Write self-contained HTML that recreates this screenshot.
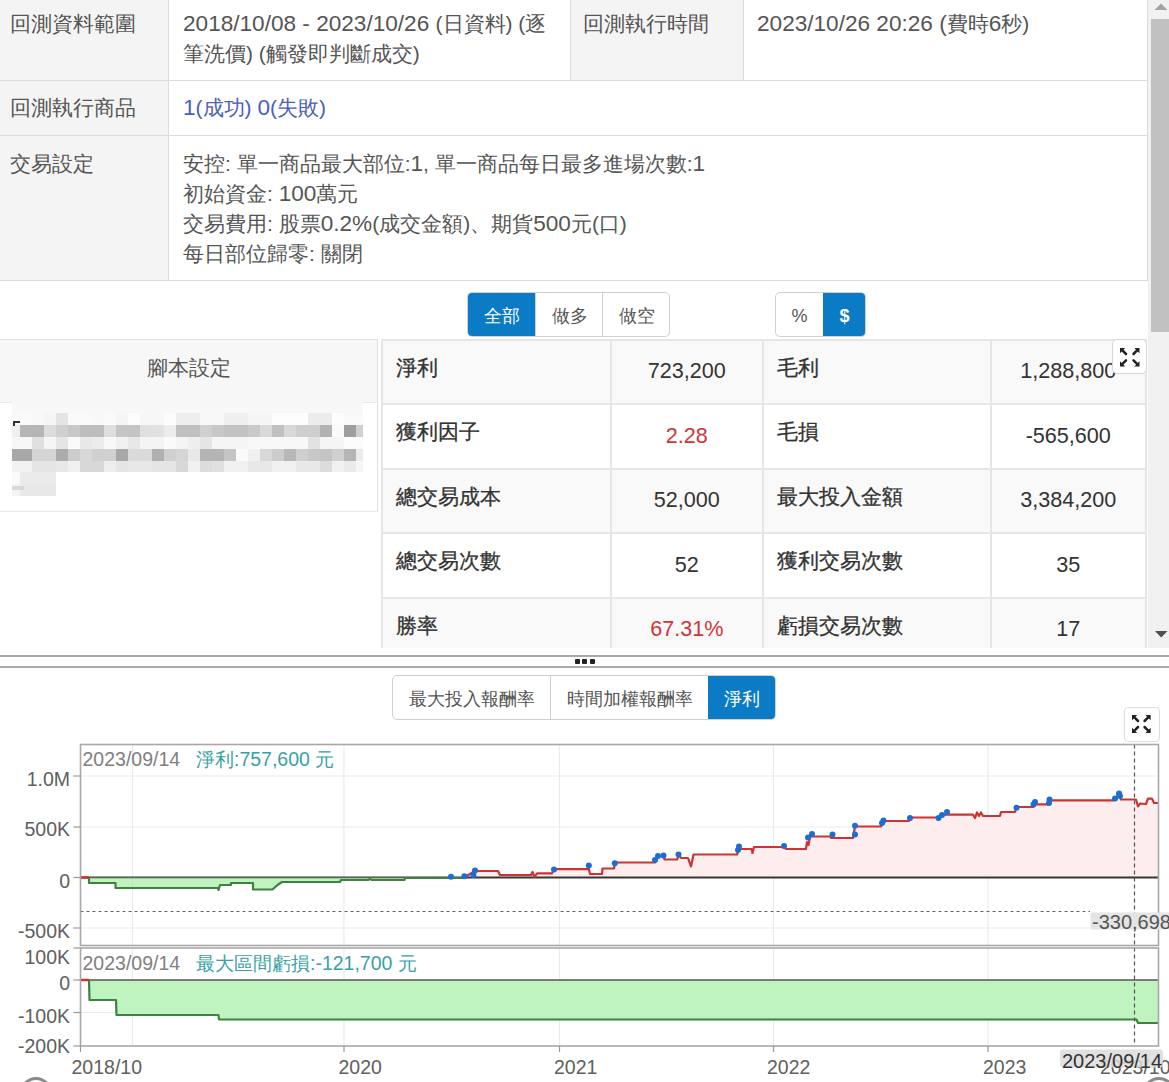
<!DOCTYPE html>
<html><head><meta charset="utf-8">
<style>
html,body{margin:0;padding:0;}
body{width:1169px;height:1082px;overflow:hidden;position:relative;background:#fff;font-family:"Liberation Sans",sans-serif;color:#555;}
.a{position:absolute;box-sizing:border-box;}
.t{position:absolute;font-size:21px;line-height:30px;white-space:nowrap;}
.lbl{background:#f4f4f4;}
.hl{position:absolute;height:1px;background:#dcdcdc;}
.vl{position:absolute;width:1px;background:#dcdcdc;}
.n{font-size:22.6px;line-height:1;}
.btn{position:absolute;box-sizing:border-box;font-size:18px;line-height:27px;text-align:center;color:#555;}
.grp{position:absolute;box-sizing:border-box;border:1px solid #d0d0d0;border-radius:5px;overflow:hidden;background:#fff;}
.act{background:#0b7bc6;color:#fff;}
.sh{position:absolute;font-size:21px;line-height:30px;white-space:nowrap;color:#333;-webkit-text-stroke:0.3px #333;}
.sv{position:absolute;font-size:21.6px;line-height:30px;white-space:nowrap;color:#333;text-align:center;}
.red{color:#d0343a;}
</style></head><body>

<!-- ===== TOP TABLE ===== -->
<div class="a lbl" style="left:0;top:0;width:168px;height:80px"></div>
<div class="a lbl" style="left:571px;top:0;width:172px;height:80px"></div>
<div class="a lbl" style="left:0;top:81px;width:168px;height:54px"></div>
<div class="a lbl" style="left:0;top:136px;width:168px;height:144px"></div>
<div class="vl" style="left:168px;top:0;height:280px"></div>
<div class="vl" style="left:570px;top:0;height:80px"></div>
<div class="vl" style="left:743px;top:0;height:80px"></div>
<div class="vl" style="left:1147px;top:0;height:280px"></div>
<div class="hl" style="left:0;top:80px;width:1148px"></div>
<div class="hl" style="left:0;top:135px;width:1148px"></div>
<div class="hl" style="left:0;top:280px;width:1148px"></div>

<div class="t" style="left:9.5px;top:9px">回測資料範圍</div>
<div class="t" style="left:183px;top:9px"><span class="n">2018/10/08 - 2023/10/26 </span>(日資料) (逐<br>筆洗價) (觸發即判斷成交)</div>
<div class="t" style="left:583px;top:9px">回測執行時間</div>
<div class="t" style="left:757px;top:9px"><span class="n">2023/10/26 20:26 (</span>費時<span class="n">6</span>秒)</div>
<div class="t" style="left:9.5px;top:93px">回測執行商品</div>
<div class="t" style="left:183px;top:93px;color:#4a60b8"><span class="n">1</span>(成功) <span class="n">0</span>(失敗)</div>
<div class="t" style="left:9.5px;top:149px">交易設定</div>
<div class="t" style="left:183px;top:149px">安控: 單一商品最大部位:<span class="n">1</span>, 單一商品每日最多進場次數:<span class="n">1</span><br>初始資金: <span class="n">100</span>萬元<br>交易費用: 股票<span class="n">0.2%</span>(成交金額)、期貨<span class="n">500</span>元(口)<br>每日部位歸零: 關閉</div>

<!-- scrollbar -->
<div class="a" style="left:1148px;top:0;width:21px;height:648px;background:#f1f1f1"></div>
<div class="a" style="left:1151px;top:19px;width:18px;height:313px;background:#c1c1c1"></div>
<svg class="a" style="left:1148px;top:0" width="21" height="648">
<polygon points="6.5,10 19.5,10 13,3.5" fill="#a3a3a3"/>
<polygon points="7,631 19.5,631 13.2,637.5" fill="#505050"/>
</svg>

<!-- ===== BUTTON GROUPS ===== -->
<div class="grp" style="left:467px;top:292px;width:203px;height:45px">
  <div class="btn act" style="left:0;top:0;width:67px;height:43px;padding-top:9.5px">全部</div>
  <div class="btn" style="left:67px;top:0;width:68px;height:43px;padding-top:9.5px;border-left:1px solid #d0d0d0">做多</div>
  <div class="btn" style="left:134px;top:0;width:68px;height:43px;padding-top:9.5px;border-left:1px solid #d0d0d0">做空</div>
</div>
<div class="grp" style="left:775px;top:292px;width:91px;height:45px">
  <div class="btn" style="left:0;top:0;width:47px;height:43px;padding-top:9.5px">%</div>
  <div class="btn act" style="left:47px;top:0;width:43px;height:43px;padding-top:9.5px;font-weight:bold">$</div>
</div>

<!-- ===== SCRIPT PANEL ===== -->
<div class="a" style="left:0;top:339px;width:378px;height:63px;background:#f7f7f7;border-top:1px solid #e0e0e0;border-right:1px solid #e0e0e0"></div>
<div class="t" style="left:0;top:353px;width:377px;text-align:center">腳本設定</div>
<div class="a" style="left:0;top:402px;width:378px;height:110px;border-top:1px solid #e8e8e8;border-bottom:1px solid #e8e8e8;border-right:1px solid #e0e0e0"></div>
<div class="a" style="left:0;top:398px;width:377px;height:120px;overflow:hidden">
<div class="a" style="left:0;top:0;width:377px;height:120px;filter:blur(0.7px)">
<div class="a" style="left:12px;top:4px;width:8px;height:11px;background:#f8f8f8"></div>
<div class="a" style="left:20px;top:4px;width:12px;height:11px;background:#f8f8f8"></div>
<div class="a" style="left:32px;top:4px;width:12px;height:11px;background:#f8f8f8"></div>
<div class="a" style="left:44px;top:4px;width:12px;height:11px;background:#f8f8f8"></div>
<div class="a" style="left:56px;top:4px;width:12px;height:11px;background:#f8f8f8"></div>
<div class="a" style="left:68px;top:4px;width:12px;height:11px;background:#f8f8f8"></div>
<div class="a" style="left:80px;top:4px;width:12px;height:11px;background:#f8f8f8"></div>
<div class="a" style="left:92px;top:4px;width:12px;height:11px;background:#f8f8f8"></div>
<div class="a" style="left:104px;top:4px;width:12px;height:11px;background:#f8f8f8"></div>
<div class="a" style="left:116px;top:4px;width:12px;height:11px;background:#f8f8f8"></div>
<div class="a" style="left:128px;top:4px;width:12px;height:11px;background:#f8f8f8"></div>
<div class="a" style="left:140px;top:4px;width:12px;height:11px;background:#f8f8f8"></div>
<div class="a" style="left:152px;top:4px;width:12px;height:11px;background:#f8f8f8"></div>
<div class="a" style="left:164px;top:4px;width:12px;height:11px;background:#f8f8f8"></div>
<div class="a" style="left:176px;top:4px;width:12px;height:11px;background:#f8f8f8"></div>
<div class="a" style="left:188px;top:4px;width:12px;height:11px;background:#f8f8f8"></div>
<div class="a" style="left:200px;top:4px;width:12px;height:11px;background:#f8f8f8"></div>
<div class="a" style="left:212px;top:4px;width:12px;height:11px;background:#f8f8f8"></div>
<div class="a" style="left:224px;top:4px;width:12px;height:11px;background:#f8f8f8"></div>
<div class="a" style="left:236px;top:4px;width:12px;height:11px;background:#f8f8f8"></div>
<div class="a" style="left:248px;top:4px;width:12px;height:11px;background:#f8f8f8"></div>
<div class="a" style="left:260px;top:4px;width:12px;height:11px;background:#f8f8f8"></div>
<div class="a" style="left:272px;top:4px;width:12px;height:11px;background:#f8f8f8"></div>
<div class="a" style="left:284px;top:4px;width:12px;height:11px;background:#f8f8f8"></div>
<div class="a" style="left:296px;top:4px;width:12px;height:11px;background:#f8f8f8"></div>
<div class="a" style="left:308px;top:4px;width:12px;height:11px;background:#f8f8f8"></div>
<div class="a" style="left:320px;top:4px;width:12px;height:11px;background:#f8f8f8"></div>
<div class="a" style="left:332px;top:4px;width:12px;height:11px;background:#f8f8f8"></div>
<div class="a" style="left:344px;top:4px;width:12px;height:11px;background:#f8f8f8"></div>
<div class="a" style="left:356px;top:4px;width:7px;height:11px;background:#f8f8f8"></div>
<div class="a" style="left:12px;top:15px;width:8px;height:11.5px;background:#fafafa"></div>
<div class="a" style="left:20px;top:15px;width:12px;height:11.5px;background:#fafafa"></div>
<div class="a" style="left:32px;top:15px;width:12px;height:11.5px;background:#f8f8f8"></div>
<div class="a" style="left:44px;top:15px;width:12px;height:11.5px;background:#f5f5f5"></div>
<div class="a" style="left:56px;top:15px;width:12px;height:11.5px;background:#e4e4e4"></div>
<div class="a" style="left:68px;top:15px;width:12px;height:11.5px;background:#fafafa"></div>
<div class="a" style="left:80px;top:15px;width:12px;height:11.5px;background:#fafafa"></div>
<div class="a" style="left:92px;top:15px;width:12px;height:11.5px;background:#f8f8f8"></div>
<div class="a" style="left:104px;top:15px;width:12px;height:11.5px;background:#fafafa"></div>
<div class="a" style="left:116px;top:15px;width:12px;height:11.5px;background:#f5f5f5"></div>
<div class="a" style="left:128px;top:15px;width:12px;height:11.5px;background:#fdfdfd"></div>
<div class="a" style="left:140px;top:15px;width:12px;height:11.5px;background:#f7f7f7"></div>
<div class="a" style="left:152px;top:15px;width:12px;height:11.5px;background:#f7f7f7"></div>
<div class="a" style="left:164px;top:15px;width:12px;height:11.5px;background:#fcfcfc"></div>
<div class="a" style="left:176px;top:15px;width:12px;height:11.5px;background:#eeeeee"></div>
<div class="a" style="left:188px;top:15px;width:12px;height:11.5px;background:#eeeeee"></div>
<div class="a" style="left:200px;top:15px;width:12px;height:11.5px;background:#f8f8f8"></div>
<div class="a" style="left:212px;top:15px;width:12px;height:11.5px;background:#f8f8f8"></div>
<div class="a" style="left:224px;top:15px;width:12px;height:11.5px;background:#efefef"></div>
<div class="a" style="left:236px;top:15px;width:12px;height:11.5px;background:#efefef"></div>
<div class="a" style="left:248px;top:15px;width:12px;height:11.5px;background:#f5f5f5"></div>
<div class="a" style="left:260px;top:15px;width:12px;height:11.5px;background:#f5f5f5"></div>
<div class="a" style="left:272px;top:15px;width:12px;height:11.5px;background:#fdfdfd"></div>
<div class="a" style="left:284px;top:15px;width:12px;height:11.5px;background:#fdfdfd"></div>
<div class="a" style="left:296px;top:15px;width:12px;height:11.5px;background:#fdfdfd"></div>
<div class="a" style="left:308px;top:15px;width:12px;height:11.5px;background:#ececec"></div>
<div class="a" style="left:320px;top:15px;width:12px;height:11.5px;background:#ececec"></div>
<div class="a" style="left:332px;top:15px;width:12px;height:11.5px;background:#fdfdfd"></div>
<div class="a" style="left:344px;top:15px;width:12px;height:11.5px;background:#f9f9f9"></div>
<div class="a" style="left:356px;top:15px;width:7px;height:11.5px;background:#f9f9f9"></div>
<div class="a" style="left:12px;top:26.5px;width:8px;height:12.5px;background:#f0f0f0"></div>
<div class="a" style="left:20px;top:26.5px;width:12px;height:12.5px;background:#b5b5b5"></div>
<div class="a" style="left:32px;top:26.5px;width:12px;height:12.5px;background:#b5b5b5"></div>
<div class="a" style="left:44px;top:26.5px;width:12px;height:12.5px;background:#dcdcdc"></div>
<div class="a" style="left:56px;top:26.5px;width:12px;height:12.5px;background:#d0d0d0"></div>
<div class="a" style="left:68px;top:26.5px;width:12px;height:12.5px;background:#c8c8c8"></div>
<div class="a" style="left:80px;top:26.5px;width:12px;height:12.5px;background:#bdbdbd"></div>
<div class="a" style="left:92px;top:26.5px;width:12px;height:12.5px;background:#bdbdbd"></div>
<div class="a" style="left:104px;top:26.5px;width:12px;height:12.5px;background:#dedede"></div>
<div class="a" style="left:116px;top:26.5px;width:12px;height:12.5px;background:#c5c5c5"></div>
<div class="a" style="left:128px;top:26.5px;width:12px;height:12.5px;background:#c4c4c4"></div>
<div class="a" style="left:140px;top:26.5px;width:12px;height:12.5px;background:#e0e0e0"></div>
<div class="a" style="left:152px;top:26.5px;width:12px;height:12.5px;background:#e2e2e2"></div>
<div class="a" style="left:164px;top:26.5px;width:12px;height:12.5px;background:#ececec"></div>
<div class="a" style="left:176px;top:26.5px;width:12px;height:12.5px;background:#c0c0c0"></div>
<div class="a" style="left:188px;top:26.5px;width:12px;height:12.5px;background:#c0c0c0"></div>
<div class="a" style="left:200px;top:26.5px;width:12px;height:12.5px;background:#d0d0d0"></div>
<div class="a" style="left:212px;top:26.5px;width:12px;height:12.5px;background:#c8c8c8"></div>
<div class="a" style="left:224px;top:26.5px;width:12px;height:12.5px;background:#c2c2c2"></div>
<div class="a" style="left:236px;top:26.5px;width:12px;height:12.5px;background:#c2c2c2"></div>
<div class="a" style="left:248px;top:26.5px;width:12px;height:12.5px;background:#c9c9c9"></div>
<div class="a" style="left:260px;top:26.5px;width:12px;height:12.5px;background:#d9d9d9"></div>
<div class="a" style="left:272px;top:26.5px;width:12px;height:12.5px;background:#c0c0c0"></div>
<div class="a" style="left:284px;top:26.5px;width:12px;height:12.5px;background:#d8d8d8"></div>
<div class="a" style="left:296px;top:26.5px;width:12px;height:12.5px;background:#cecece"></div>
<div class="a" style="left:308px;top:26.5px;width:12px;height:12.5px;background:#cecece"></div>
<div class="a" style="left:320px;top:26.5px;width:12px;height:12.5px;background:#b2b2b2"></div>
<div class="a" style="left:332px;top:26.5px;width:12px;height:12.5px;background:#fafafa"></div>
<div class="a" style="left:344px;top:26.5px;width:12px;height:12.5px;background:#9e9e9e"></div>
<div class="a" style="left:356px;top:26.5px;width:7px;height:12.5px;background:#cfcfcf"></div>
<div class="a" style="left:12px;top:39px;width:8px;height:12px;background:#f7f7f7"></div>
<div class="a" style="left:20px;top:39px;width:12px;height:12px;background:#f7f7f7"></div>
<div class="a" style="left:32px;top:39px;width:12px;height:12px;background:#e0e0e0"></div>
<div class="a" style="left:44px;top:39px;width:12px;height:12px;background:#f5f5f5"></div>
<div class="a" style="left:56px;top:39px;width:12px;height:12px;background:#e5e5e5"></div>
<div class="a" style="left:68px;top:39px;width:12px;height:12px;background:#fafafa"></div>
<div class="a" style="left:80px;top:39px;width:12px;height:12px;background:#e8e8e8"></div>
<div class="a" style="left:92px;top:39px;width:12px;height:12px;background:#ececec"></div>
<div class="a" style="left:104px;top:39px;width:12px;height:12px;background:#f8f8f8"></div>
<div class="a" style="left:116px;top:39px;width:12px;height:12px;background:#f0f0f0"></div>
<div class="a" style="left:128px;top:39px;width:12px;height:12px;background:#e8e8e8"></div>
<div class="a" style="left:140px;top:39px;width:12px;height:12px;background:#f4f4f4"></div>
<div class="a" style="left:152px;top:39px;width:12px;height:12px;background:#f4f4f4"></div>
<div class="a" style="left:164px;top:39px;width:12px;height:12px;background:#fafafa"></div>
<div class="a" style="left:176px;top:39px;width:12px;height:12px;background:#f5f5f5"></div>
<div class="a" style="left:188px;top:39px;width:12px;height:12px;background:#eeeeee"></div>
<div class="a" style="left:200px;top:39px;width:12px;height:12px;background:#e5e5e5"></div>
<div class="a" style="left:212px;top:39px;width:12px;height:12px;background:#f5f5f5"></div>
<div class="a" style="left:224px;top:39px;width:12px;height:12px;background:#f5f5f5"></div>
<div class="a" style="left:236px;top:39px;width:12px;height:12px;background:#f5f5f5"></div>
<div class="a" style="left:248px;top:39px;width:12px;height:12px;background:#f8f8f8"></div>
<div class="a" style="left:260px;top:39px;width:12px;height:12px;background:#f8f8f8"></div>
<div class="a" style="left:272px;top:39px;width:12px;height:12px;background:#f8f8f8"></div>
<div class="a" style="left:284px;top:39px;width:12px;height:12px;background:#f8f8f8"></div>
<div class="a" style="left:296px;top:39px;width:12px;height:12px;background:#f8f8f8"></div>
<div class="a" style="left:308px;top:39px;width:12px;height:12px;background:#e2e2e2"></div>
<div class="a" style="left:320px;top:39px;width:12px;height:12px;background:#f5f5f5"></div>
<div class="a" style="left:332px;top:39px;width:12px;height:12px;background:#f5f5f5"></div>
<div class="a" style="left:344px;top:39px;width:12px;height:12px;background:#fcfcfc"></div>
<div class="a" style="left:356px;top:39px;width:7px;height:12px;background:#fcfcfc"></div>
<div class="a" style="left:12px;top:51px;width:8px;height:12px;background:#a8a8a8"></div>
<div class="a" style="left:20px;top:51px;width:12px;height:12px;background:#a8a8a8"></div>
<div class="a" style="left:32px;top:51px;width:12px;height:12px;background:#d5d5d5"></div>
<div class="a" style="left:44px;top:51px;width:12px;height:12px;background:#d5d5d5"></div>
<div class="a" style="left:56px;top:51px;width:12px;height:12px;background:#ababab"></div>
<div class="a" style="left:68px;top:51px;width:12px;height:12px;background:#cccccc"></div>
<div class="a" style="left:80px;top:51px;width:12px;height:12px;background:#d8d8d8"></div>
<div class="a" style="left:92px;top:51px;width:12px;height:12px;background:#d0d0d0"></div>
<div class="a" style="left:104px;top:51px;width:12px;height:12px;background:#d0d0d0"></div>
<div class="a" style="left:116px;top:51px;width:12px;height:12px;background:#a8a8a8"></div>
<div class="a" style="left:128px;top:51px;width:12px;height:12px;background:#dadada"></div>
<div class="a" style="left:140px;top:51px;width:12px;height:12px;background:#dadada"></div>
<div class="a" style="left:152px;top:51px;width:12px;height:12px;background:#b0b0b0"></div>
<div class="a" style="left:164px;top:51px;width:12px;height:12px;background:#d0d0d0"></div>
<div class="a" style="left:176px;top:51px;width:12px;height:12px;background:#d5d5d5"></div>
<div class="a" style="left:188px;top:51px;width:12px;height:12px;background:#e8e8e8"></div>
<div class="a" style="left:200px;top:51px;width:12px;height:12px;background:#b5b5b5"></div>
<div class="a" style="left:212px;top:51px;width:12px;height:12px;background:#b5b5b5"></div>
<div class="a" style="left:224px;top:51px;width:12px;height:12px;background:#c5c5c5"></div>
<div class="a" style="left:236px;top:51px;width:12px;height:12px;background:#fafafa"></div>
<div class="a" style="left:248px;top:51px;width:12px;height:12px;background:#f0f0f0"></div>
<div class="a" style="left:260px;top:51px;width:12px;height:12px;background:#d8d8d8"></div>
<div class="a" style="left:272px;top:51px;width:12px;height:12px;background:#cccccc"></div>
<div class="a" style="left:284px;top:51px;width:12px;height:12px;background:#b8b8b8"></div>
<div class="a" style="left:296px;top:51px;width:12px;height:12px;background:#cfcfcf"></div>
<div class="a" style="left:308px;top:51px;width:12px;height:12px;background:#c8c8c8"></div>
<div class="a" style="left:320px;top:51px;width:12px;height:12px;background:#c5c5c5"></div>
<div class="a" style="left:332px;top:51px;width:12px;height:12px;background:#d0d0d0"></div>
<div class="a" style="left:344px;top:51px;width:12px;height:12px;background:#b5b5b5"></div>
<div class="a" style="left:356px;top:51px;width:7px;height:12px;background:#ececec"></div>
<div class="a" style="left:12px;top:63px;width:8px;height:11px;background:#f2f2f2"></div>
<div class="a" style="left:20px;top:63px;width:12px;height:11px;background:#f2f2f2"></div>
<div class="a" style="left:32px;top:63px;width:12px;height:11px;background:#e5e5e5"></div>
<div class="a" style="left:44px;top:63px;width:12px;height:11px;background:#e5e5e5"></div>
<div class="a" style="left:56px;top:63px;width:12px;height:11px;background:#e8e8e8"></div>
<div class="a" style="left:68px;top:63px;width:12px;height:11px;background:#f0f0f0"></div>
<div class="a" style="left:80px;top:63px;width:12px;height:11px;background:#d8d8d8"></div>
<div class="a" style="left:92px;top:63px;width:12px;height:11px;background:#d8d8d8"></div>
<div class="a" style="left:104px;top:63px;width:12px;height:11px;background:#eeeeee"></div>
<div class="a" style="left:116px;top:63px;width:12px;height:11px;background:#e5e5e5"></div>
<div class="a" style="left:128px;top:63px;width:12px;height:11px;background:#e8e8e8"></div>
<div class="a" style="left:140px;top:63px;width:12px;height:11px;background:#e8e8e8"></div>
<div class="a" style="left:152px;top:63px;width:12px;height:11px;background:#e5e5e5"></div>
<div class="a" style="left:164px;top:63px;width:12px;height:11px;background:#e5e5e5"></div>
<div class="a" style="left:176px;top:63px;width:12px;height:11px;background:#d8d8d8"></div>
<div class="a" style="left:188px;top:63px;width:12px;height:11px;background:#f0f0f0"></div>
<div class="a" style="left:200px;top:63px;width:12px;height:11px;background:#dcdcdc"></div>
<div class="a" style="left:212px;top:63px;width:12px;height:11px;background:#e0e0e0"></div>
<div class="a" style="left:224px;top:63px;width:12px;height:11px;background:#f0f0f0"></div>
<div class="a" style="left:236px;top:63px;width:12px;height:11px;background:#f0f0f0"></div>
<div class="a" style="left:248px;top:63px;width:12px;height:11px;background:#e8e8e8"></div>
<div class="a" style="left:260px;top:63px;width:12px;height:11px;background:#e8e8e8"></div>
<div class="a" style="left:272px;top:63px;width:12px;height:11px;background:#f0f0f0"></div>
<div class="a" style="left:284px;top:63px;width:12px;height:11px;background:#f0f0f0"></div>
<div class="a" style="left:296px;top:63px;width:12px;height:11px;background:#e8e8e8"></div>
<div class="a" style="left:308px;top:63px;width:12px;height:11px;background:#e8e8e8"></div>
<div class="a" style="left:320px;top:63px;width:12px;height:11px;background:#dcdcdc"></div>
<div class="a" style="left:332px;top:63px;width:12px;height:11px;background:#f0f0f0"></div>
<div class="a" style="left:344px;top:63px;width:12px;height:11px;background:#eaeaea"></div>
<div class="a" style="left:356px;top:63px;width:7px;height:11px;background:#f5f5f5"></div>
<div class="a" style="left:12px;top:74px;width:8px;height:12px;background:#fafafa"></div>
<div class="a" style="left:20px;top:74px;width:12px;height:12px;background:#ebebeb"></div>
<div class="a" style="left:32px;top:74px;width:12px;height:12px;background:#ebebeb"></div>
<div class="a" style="left:44px;top:74px;width:12px;height:12px;background:#ebebeb"></div>
<div class="a" style="left:12px;top:86px;width:8px;height:12px;background:#f4f4f4"></div>
<div class="a" style="left:20px;top:86px;width:12px;height:12px;background:#e8e8e8"></div>
<div class="a" style="left:32px;top:86px;width:12px;height:12px;background:#e8e8e8"></div>
<div class="a" style="left:44px;top:86px;width:12px;height:12px;background:#e8e8e8"></div>
<div class="a" style="left:12px;top:88px;width:12px;height:4px;background:#d8d8d8"></div>
</div>
<div class="a" style="left:13px;top:23px;width:7px;height:2px;background:#333"></div><div class="a" style="left:13px;top:23px;width:2px;height:5px;background:#333"></div>
</div>

<!-- ===== STATS TABLE ===== -->
<div class="a" style="left:381px;top:339px;width:766px;height:309px;overflow:hidden">
<div class="a" style="left:0;top:0px;width:766px;height:64.5px;background:#f9f9f9"></div>
<div class="sh" style="left:14.5px;top:13.5px">淨利</div>
<div class="sv" style="left:229.5px;top:17px;width:152.5px">723,200</div>
<div class="sh" style="left:396px;top:13.5px">毛利</div>
<div class="sv" style="left:610px;top:17px;width:154.5px">1,288,800</div>
<div class="a" style="left:0;top:64.5px;width:766px;height:64.5px;background:#fff"></div>
<div class="sh" style="left:14.5px;top:78.0px">獲利因子</div>
<div class="sv red" style="left:229.5px;top:81.5px;width:152.5px">2.28</div>
<div class="sh" style="left:396px;top:78.0px">毛損</div>
<div class="sv" style="left:610px;top:81.5px;width:154.5px">-565,600</div>
<div class="a" style="left:0;top:129px;width:766px;height:64.5px;background:#f9f9f9"></div>
<div class="sh" style="left:14.5px;top:142.5px">總交易成本</div>
<div class="sv" style="left:229.5px;top:146px;width:152.5px">52,000</div>
<div class="sh" style="left:396px;top:142.5px">最大投入金額</div>
<div class="sv" style="left:610px;top:146px;width:154.5px">3,384,200</div>
<div class="a" style="left:0;top:193.5px;width:766px;height:64.5px;background:#fff"></div>
<div class="sh" style="left:14.5px;top:207.0px">總交易次數</div>
<div class="sv" style="left:229.5px;top:210.5px;width:152.5px">52</div>
<div class="sh" style="left:396px;top:207.0px">獲利交易次數</div>
<div class="sv" style="left:610px;top:210.5px;width:154.5px">35</div>
<div class="a" style="left:0;top:258px;width:766px;height:64.5px;background:#f9f9f9"></div>
<div class="sh" style="left:14.5px;top:271.5px">勝率</div>
<div class="sv red" style="left:229.5px;top:275px;width:152.5px">67.31%</div>
<div class="sh" style="left:396px;top:271.5px">虧損交易次數</div>
<div class="sv" style="left:610px;top:275px;width:154.5px">17</div>
<div class="a" style="left:0;top:-0.5px;width:766px;height:2px;background:#e6e6e6"></div>
<div class="a" style="left:0;top:64.0px;width:766px;height:2px;background:#e6e6e6"></div>
<div class="a" style="left:0;top:128.5px;width:766px;height:2px;background:#e6e6e6"></div>
<div class="a" style="left:0;top:193.0px;width:766px;height:2px;background:#e6e6e6"></div>
<div class="a" style="left:0;top:257.5px;width:766px;height:2px;background:#e6e6e6"></div>
<div class="a" style="left:0;top:322.0px;width:766px;height:2px;background:#e6e6e6"></div>
<div class="a" style="left:-0.5px;top:0;width:2px;height:309px;background:#e6e6e6"></div>
<div class="a" style="left:228.5px;top:0;width:2px;height:309px;background:#e6e6e6"></div>
<div class="a" style="left:381px;top:0;width:2px;height:309px;background:#e6e6e6"></div>
<div class="a" style="left:609px;top:0;width:2px;height:309px;background:#e6e6e6"></div>
<div class="a" style="left:763.5px;top:0;width:2px;height:309px;background:#e6e6e6"></div>
</div>

<!-- expand icon 1 -->
<div class="a" style="left:1112px;top:339px;width:35px;height:35px;background:#fff;border:1.5px solid #d6d6d6;border-radius:5px"></div>

<!-- splitter -->
<div class="a" style="left:0;top:655px;width:1169px;height:2px;background:#a9a9a9"></div>
<div class="a" style="left:0;top:666px;width:1169px;height:2px;background:#a9a9a9"></div>
<div class="a" style="left:575px;top:659px;width:5px;height:5px;background:#222;border-radius:1px"></div>
<div class="a" style="left:582px;top:659px;width:5px;height:5px;background:#222;border-radius:1px"></div>
<div class="a" style="left:590px;top:659px;width:5px;height:5px;background:#222;border-radius:1px"></div>

<!-- bottom group -->
<div class="grp" style="left:392px;top:675px;width:384px;height:45px">
  <div class="btn" style="left:0;top:0;width:158px;height:43px;padding-top:9.5px">最大投入報酬率</div>
  <div class="btn" style="left:157px;top:0;width:158px;height:43px;padding-top:9.5px;border-left:1px solid #d0d0d0">時間加權報酬率</div>
  <div class="btn act" style="left:315px;top:0;width:68px;height:43px;padding-top:9.5px">淨利</div>
</div>
<div class="a" style="left:1124px;top:707px;width:36px;height:35px;background:#fff;border:1px solid #dcdcdc;border-radius:4px"></div>

<!-- ===== CHART ===== -->
<svg id="chart" class="a" style="left:0;top:730px" width="1169" height="352" viewBox="0 730 1169 352"><line x1="80.5" y1="776" x2="1158.5" y2="776" stroke="#ebebeb" stroke-width="1.2"/>
<line x1="80.5" y1="827" x2="1158.5" y2="827" stroke="#ebebeb" stroke-width="1.2"/>
<line x1="80.5" y1="928" x2="1158.5" y2="928" stroke="#ebebeb" stroke-width="1.2"/>
<line x1="80.5" y1="1012.5" x2="1158.5" y2="1012.5" stroke="#ebebeb" stroke-width="1.2"/>
<line x1="132.5" y1="744.5" x2="132.5" y2="945.5" stroke="#e6ecf0" stroke-width="1.2"/>
<line x1="132.5" y1="948" x2="132.5" y2="1046" stroke="#e6ecf0" stroke-width="1.2"/>
<line x1="344" y1="744.5" x2="344" y2="945.5" stroke="#e6ecf0" stroke-width="1.2"/>
<line x1="344" y1="948" x2="344" y2="1046" stroke="#e6ecf0" stroke-width="1.2"/>
<line x1="559.5" y1="744.5" x2="559.5" y2="945.5" stroke="#e6ecf0" stroke-width="1.2"/>
<line x1="559.5" y1="948" x2="559.5" y2="1046" stroke="#e6ecf0" stroke-width="1.2"/>
<line x1="773.5" y1="744.5" x2="773.5" y2="945.5" stroke="#e6ecf0" stroke-width="1.2"/>
<line x1="773.5" y1="948" x2="773.5" y2="1046" stroke="#e6ecf0" stroke-width="1.2"/>
<line x1="988" y1="744.5" x2="988" y2="945.5" stroke="#e6ecf0" stroke-width="1.2"/>
<line x1="988" y1="948" x2="988" y2="1046" stroke="#e6ecf0" stroke-width="1.2"/>
<polygon points="463,877.5 463,878 475,871 498,871 500,875 531,875 532.5,872 534.5,877 537,873.4 552,873.4 554,869.2 589,869.2 590,874 602,874 602.5,868.5 614,868.5 615,862.5 655,862.5 658,856 664,856 664.5,859.5 677,859.5 679,855 681,858 688,858 691,866.5 693.5,854.5 737,854.5 739,849 751.5,849 752.5,853 754,847 784,847 786,849 806,849 807,842 808.5,845 810,837 812,836.5 830,836.5 831,838 853,838 855,826.5 881,826.5 883.5,821 909,821 910,817.5 938,817.5 942,815 947,814.6 973,814.6 975,818 977,812.5 979,816 981,812.5 983,816 1000,816 1001,812 1015,812 1016.5,807 1033,807 1035,804.3 1048.5,804.3 1049.5,800.4 1114,800.4 1119,794 1121,799.5 1136,799.5 1138,806.5 1140,803.5 1146,804 1148,798.6 1152,798.6 1154,803 1158,803 1158,877.5" fill="#fdeded"/>
<line x1="80.5" y1="877.5" x2="1158.5" y2="877.5" stroke="#373732" stroke-width="1.8"/>
<polygon points="89,877.5 89,877.5 89,883 115.5,883 115.5,888 218,888 218.5,890 220,885 231,885 231,883 253,883 253,889.5 272.5,889.5 277.5,885 282,882 340,882 341,880 368,880 370,879 372,880 404.5,880 405,878 448,878 463,878 463,877.5" fill="rgb(150,235,150)" fill-opacity="0.6"/>
<polyline points="89,877.5 89,883 115.5,883 115.5,888 218,888 218.5,890 220,885 231,885 231,883 253,883 253,889.5 272.5,889.5 277.5,885 282,882 340,882 341,880 368,880 370,879 372,880 404.5,880 405,878 448,878 463,878" fill="none" stroke="#3d823d" stroke-width="2.2" stroke-linejoin="round"/>
<polyline points="463,878 475,871 498,871 500,875 531,875 532.5,872 534.5,877 537,873.4 552,873.4 554,869.2 589,869.2 590,874 602,874 602.5,868.5 614,868.5 615,862.5 655,862.5 658,856 664,856 664.5,859.5 677,859.5 679,855 681,858 688,858 691,866.5 693.5,854.5 737,854.5 739,849 751.5,849 752.5,853 754,847 784,847 786,849 806,849 807,842 808.5,845 810,837 812,836.5 830,836.5 831,838 853,838 855,826.5 881,826.5 883.5,821 909,821 910,817.5 938,817.5 942,815 947,814.6 973,814.6 975,818 977,812.5 979,816 981,812.5 983,816 1000,816 1001,812 1015,812 1016.5,807 1033,807 1035,804.3 1048.5,804.3 1049.5,800.4 1114,800.4 1119,794 1121,799.5 1136,799.5 1138,806.5 1140,803.5 1146,804 1148,798.6 1152,798.6 1154,803 1158,803" fill="none" stroke="#cf3232" stroke-width="2.2" stroke-linejoin="round"/>
<line x1="80" y1="877.5" x2="89" y2="877.5" stroke="#cf3232" stroke-width="2.5"/>
<circle cx="451" cy="876.7" r="3.0" fill="#1c6fd1"/>
<circle cx="464.4" cy="876.3" r="3.0" fill="#1c6fd1"/>
<circle cx="473.4" cy="875" r="3.0" fill="#1c6fd1"/>
<circle cx="475" cy="870.6" r="3.0" fill="#1c6fd1"/>
<circle cx="554" cy="869.5" r="3.0" fill="#1c6fd1"/>
<circle cx="588.8" cy="865.5" r="3.0" fill="#1c6fd1"/>
<circle cx="614.8" cy="863.2" r="3.0" fill="#1c6fd1"/>
<circle cx="655" cy="860" r="3.0" fill="#1c6fd1"/>
<circle cx="658" cy="856" r="3.0" fill="#1c6fd1"/>
<circle cx="663.5" cy="855.5" r="3.0" fill="#1c6fd1"/>
<circle cx="678.5" cy="854.5" r="3.0" fill="#1c6fd1"/>
<circle cx="738" cy="850" r="3.0" fill="#1c6fd1"/>
<circle cx="739" cy="846.5" r="3.0" fill="#1c6fd1"/>
<circle cx="784" cy="846" r="3.0" fill="#1c6fd1"/>
<circle cx="808" cy="837.5" r="3.0" fill="#1c6fd1"/>
<circle cx="812" cy="834" r="3.0" fill="#1c6fd1"/>
<circle cx="832.5" cy="834.5" r="3.0" fill="#1c6fd1"/>
<circle cx="855" cy="834.5" r="3.0" fill="#1c6fd1"/>
<circle cx="855" cy="825.7" r="3.0" fill="#1c6fd1"/>
<circle cx="882" cy="823" r="3.0" fill="#1c6fd1"/>
<circle cx="883.5" cy="820.5" r="3.0" fill="#1c6fd1"/>
<circle cx="910" cy="818" r="3.0" fill="#1c6fd1"/>
<circle cx="938.5" cy="818" r="3.0" fill="#1c6fd1"/>
<circle cx="942" cy="815" r="3.0" fill="#1c6fd1"/>
<circle cx="947" cy="812" r="3.0" fill="#1c6fd1"/>
<circle cx="1016.5" cy="807.8" r="3.0" fill="#1c6fd1"/>
<circle cx="1033.5" cy="804.5" r="3.0" fill="#1c6fd1"/>
<circle cx="1035" cy="802" r="3.0" fill="#1c6fd1"/>
<circle cx="1049" cy="803" r="3.0" fill="#1c6fd1"/>
<circle cx="1049.5" cy="799.5" r="3.0" fill="#1c6fd1"/>
<circle cx="1115" cy="798.6" r="3.0" fill="#1c6fd1"/>
<circle cx="1120" cy="796" r="3.0" fill="#1c6fd1"/>
<circle cx="1119" cy="793.5" r="3.0" fill="#1c6fd1"/>
<polygon points="89,980 89.5,1000 116,1000 116.5,1015 218.5,1015 219,1019.5 1136.5,1019.5 1138,1023 1158,1023 1158,980" fill="#bff3bf"/>
<line x1="80.5" y1="980" x2="1158.5" y2="980" stroke="#555" stroke-width="1.5"/>
<polyline points="89,980 89.5,1000 116,1000 116.5,1015 218.5,1015 219,1019.5 1136.5,1019.5 1138,1023 1158,1023" fill="none" stroke="#3d823d" stroke-width="2.2" stroke-linejoin="round"/>
<line x1="80" y1="980" x2="89" y2="980" stroke="#cf3232" stroke-width="2.5"/>
<line x1="80.5" y1="911.5" x2="1090" y2="911.5" stroke="#666" stroke-width="1" stroke-dasharray="3,3"/>
<line x1="1134.5" y1="744.5" x2="1134.5" y2="1046" stroke="#555" stroke-width="1.2" stroke-dasharray="4,3"/>
<rect x="80.5" y="744.5" width="1078.0" height="201.0" fill="none" stroke="#a8a8a8" stroke-width="1.6"/>
<rect x="80.5" y="948" width="1078.0" height="98" fill="none" stroke="#a8a8a8" stroke-width="1.6"/>
<line x1="73.5" y1="776" x2="80.5" y2="776" stroke="#999" stroke-width="1.2"/>
<line x1="73.5" y1="827" x2="80.5" y2="827" stroke="#999" stroke-width="1.2"/>
<line x1="73.5" y1="877.5" x2="80.5" y2="877.5" stroke="#999" stroke-width="1.2"/>
<line x1="73.5" y1="928" x2="80.5" y2="928" stroke="#999" stroke-width="1.2"/>
<line x1="73.5" y1="948" x2="80.5" y2="948" stroke="#999" stroke-width="1.2"/>
<line x1="73.5" y1="980" x2="80.5" y2="980" stroke="#999" stroke-width="1.2"/>
<line x1="73.5" y1="1012.5" x2="80.5" y2="1012.5" stroke="#999" stroke-width="1.2"/>
<line x1="73.5" y1="1046" x2="80.5" y2="1046" stroke="#999" stroke-width="1.2"/>
<line x1="80.5" y1="1046" x2="80.5" y2="1052" stroke="#999" stroke-width="1.2"/>
<line x1="344" y1="1046" x2="344" y2="1052" stroke="#999" stroke-width="1.2"/>
<line x1="559.5" y1="1046" x2="559.5" y2="1052" stroke="#999" stroke-width="1.2"/>
<line x1="773.5" y1="1046" x2="773.5" y2="1052" stroke="#999" stroke-width="1.2"/>
<line x1="988" y1="1046" x2="988" y2="1052" stroke="#999" stroke-width="1.2"/>
<text x="70" y="785.5" text-anchor="end" font-family="Liberation Sans" font-size="19.5" fill="#606060">1.0M</text>
<text x="70" y="836" text-anchor="end" font-family="Liberation Sans" font-size="19.5" fill="#606060">500K</text>
<text x="70" y="887.5" text-anchor="end" font-family="Liberation Sans" font-size="19.5" fill="#606060">0</text>
<text x="70" y="938" text-anchor="end" font-family="Liberation Sans" font-size="19.5" fill="#606060">-500K</text>
<text x="70" y="964" text-anchor="end" font-family="Liberation Sans" font-size="19.5" fill="#606060">100K</text>
<text x="70" y="989.5" text-anchor="end" font-family="Liberation Sans" font-size="19.5" fill="#606060">0</text>
<text x="70" y="1022.5" text-anchor="end" font-family="Liberation Sans" font-size="19.5" fill="#606060">-100K</text>
<text x="70" y="1053" text-anchor="end" font-family="Liberation Sans" font-size="19.5" fill="#606060">-200K</text>
<text x="71.5" y="1073.8" font-family="Liberation Sans" font-size="19.5" fill="#606060">2018/10</text>
<text x="338.5" y="1073.8" font-family="Liberation Sans" font-size="19.5" fill="#606060">2020</text>
<text x="554" y="1073.8" font-family="Liberation Sans" font-size="19.5" fill="#606060">2021</text>
<text x="767" y="1073.8" font-family="Liberation Sans" font-size="19.5" fill="#606060">2022</text>
<text x="983" y="1073.8" font-family="Liberation Sans" font-size="19.5" fill="#606060">2023</text>
<text x="1100" y="1073.8" font-family="Liberation Sans" font-size="19.5" fill="#606060">2023/10</text>
<text x="82.5" y="766" font-family="Liberation Sans" font-size="19.5" fill="#808080">2023/09/14</text>
<text x="196" y="766" font-family="Liberation Sans" font-size="19.5" fill="#3a9fa6"><tspan font-size="18.5">淨利</tspan>:757,600 <tspan font-size="18.5">元</tspan></text>
<text x="82.5" y="970" font-family="Liberation Sans" font-size="19.5" fill="#808080">2023/09/14</text>
<text x="196" y="970" font-family="Liberation Sans" font-size="19.5" fill="#3a9fa6"><tspan font-size="18.5">最大區間虧損</tspan>:-121,700 <tspan font-size="18.5">元</tspan></text>
<rect x="1090.5" y="912.5" width="90" height="17" rx="2" fill="#e4e4e4"/>
<text x="1092" y="929" font-family="Liberation Sans" font-size="20" fill="#555">-330,698</text>
<rect x="1060" y="1049.5" width="103" height="18" rx="3" fill="#dcdcdc" fill-opacity="0.85"/>
<text x="1062" y="1067.5" font-family="Liberation Sans" font-size="20" fill="#333">2023/09/14</text>
<circle cx="36" cy="1093" r="14.5" fill="none" stroke="#8a8a8a" stroke-width="3"/>
<circle cx="1159" cy="1093.5" r="15" fill="none" stroke="#8a8a8a" stroke-width="3"/></svg>

<svg class="a" style="left:1120px;top:348px;overflow:visible" width="19.5" height="18.4"><polygon points="0,0 5.2,0 0,5.2" fill="#222"/><path d="M2.2,2.2 L6.0,6.0" stroke="#222" stroke-width="2.5" stroke-linecap="round"/><polygon points="19.5,0 14.3,0 19.5,5.2" fill="#222"/><path d="M17.3,2.2 L13.5,6.0" stroke="#222" stroke-width="2.5" stroke-linecap="round"/><polygon points="0,18.4 5.2,18.4 0,13.2" fill="#222"/><path d="M2.2,16.2 L6.0,12.399999999999999" stroke="#222" stroke-width="2.5" stroke-linecap="round"/><polygon points="19.5,18.4 14.3,18.4 19.5,13.2" fill="#222"/><path d="M17.3,16.2 L13.5,12.399999999999999" stroke="#222" stroke-width="2.5" stroke-linecap="round"/></svg><svg class="a" style="left:1132.4px;top:715.4px;overflow:visible" width="18.6" height="18"><polygon points="0,0 5.2,0 0,5.2" fill="#222"/><path d="M2.2,2.2 L6.0,6.0" stroke="#222" stroke-width="2.5" stroke-linecap="round"/><polygon points="18.6,0 13.400000000000002,0 18.6,5.2" fill="#222"/><path d="M16.400000000000002,2.2 L12.600000000000001,6.0" stroke="#222" stroke-width="2.5" stroke-linecap="round"/><polygon points="0,18 5.2,18 0,12.8" fill="#222"/><path d="M2.2,15.8 L6.0,12.0" stroke="#222" stroke-width="2.5" stroke-linecap="round"/><polygon points="18.6,18 13.400000000000002,18 18.6,12.8" fill="#222"/><path d="M16.400000000000002,15.8 L12.600000000000001,12.0" stroke="#222" stroke-width="2.5" stroke-linecap="round"/></svg>
</body></html>
